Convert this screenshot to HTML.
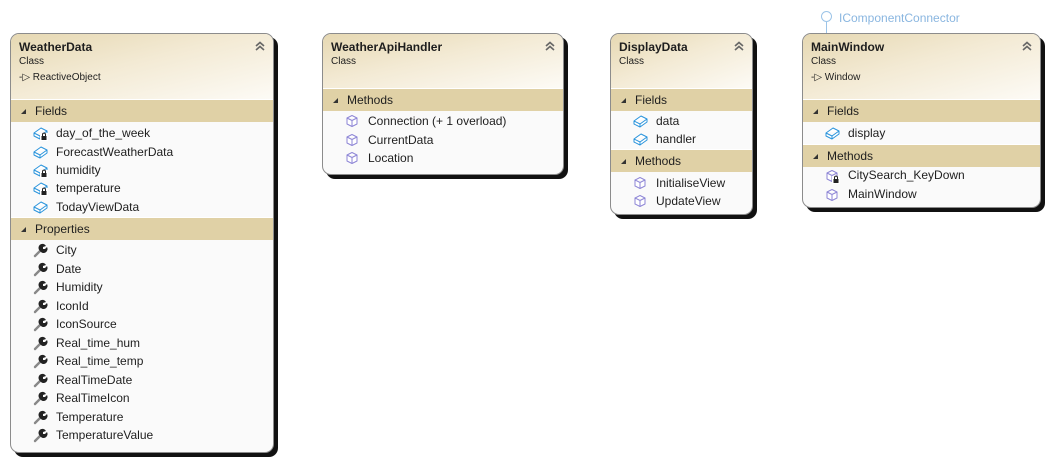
<!DOCTYPE html>
<html><head><meta charset="utf-8">
<style>
*{margin:0;padding:0;box-sizing:border-box}
body{width:1051px;height:462px;background:#fff;position:relative;overflow:hidden;font-family:"Liberation Sans",sans-serif;color:#1e1e1e}
.box{position:absolute;border:1px solid #8c8c8c;border-radius:9px;background:#fafafa;box-shadow:4px 4px 0 #111;overflow:hidden}
.hd{position:absolute;left:0;right:0;top:0;background:linear-gradient(to right bottom,#e6d8b2 0%,#f3ead4 45%,#fdfbf6 100%)}
.t{position:absolute;left:8px;top:6px;font-weight:bold;font-size:12px}
.c{position:absolute;left:8px;top:22px;font-size:10px}
.b{position:absolute;left:8px;top:38px;font-size:10px}
.chev{position:absolute;right:8px;top:7px;width:10px;height:10px}
.sec{position:absolute;left:0;right:0;height:23px;background:#e0d1a6;font-size:12px;border-top:1px solid #fff}
.sec span{position:absolute;left:24px;top:4px}
.sec i{position:absolute;left:10px;top:9px;width:0;height:0;border-left:5px solid transparent;border-bottom:5px solid #333}
.it{position:absolute;font-size:12px;white-space:nowrap}
.ic{position:absolute;width:16px;height:16px}
</style></head><body>

<svg width="0" height="0" style="position:absolute">
<defs>
<g id="fld"><path d="M2 8 L9 3 L15 6 L15 9 L8 14 L2 11 Z M2 8 L8 11 L15 6 M8 11 L8 14" fill="#fff" stroke="#2a94dc" stroke-width="1" stroke-linejoin="round"/></g>
<g id="mth"><path d="M3 5 L8 2.5 L13 5 L13 11 L8 13.5 L3 11 Z M3 5 L8 7.5 L13 5 M8 7.5 L8 13.5" fill="#fff" stroke="#8e86d6" stroke-width="1" stroke-linejoin="round"/></g>
<g id="lock"><rect x="8" y="8" width="8" height="8" fill="#fff"/><rect x="9.5" y="11" width="5" height="4" fill="#222"/><path d="M10.5 11 V9.6 a1.5 1.5 0 0 1 3 0 V11" fill="none" stroke="#222" stroke-width="1"/></g>
<g id="prp"><path d="M3 14 L9 8" stroke="#888" stroke-width="2.4" stroke-linecap="round"/><path d="M8 9 a4 4 0 1 1 6 -5 l-3 1 l0 2 l2 0 l2 -2 a4 4 0 0 1 -7 4" fill="#222"/></g>
<g id="chv"><path d="M1 5 L5 1.5 L9 5 M1 9 L5 5.5 L9 9" fill="none" stroke="#666" stroke-width="1.6"/></g>
</defs></svg>

<!-- WeatherData -->
<div class="box" style="left:10px;top:33px;width:264px;height:420px">
 <div class="hd" style="height:66px"><div class="t">WeatherData</div><div class="c">Class</div><div class="b">-▷ ReactiveObject</div><svg class="chev"><use href="#chv"/></svg></div>
 <div class="sec" style="top:65px"><i></i><span>Fields</span></div>
 <svg class="ic" style="left:21px;top:91px"><use href="#fld"/><use href="#lock"/></svg><div class="it" style="left:45px;top:92px">day_of_the_week</div>
 <svg class="ic" style="left:21px;top:110px"><use href="#fld"/></svg><div class="it" style="left:45px;top:111px">ForecastWeatherData</div>
 <svg class="ic" style="left:21px;top:128px"><use href="#fld"/><use href="#lock"/></svg><div class="it" style="left:45px;top:129px">humidity</div>
 <svg class="ic" style="left:21px;top:146px"><use href="#fld"/><use href="#lock"/></svg><div class="it" style="left:45px;top:147px">temperature</div>
 <svg class="ic" style="left:21px;top:165px"><use href="#fld"/></svg><div class="it" style="left:45px;top:166px">TodayViewData</div>
 <div class="sec" style="top:183px"><i></i><span>Properties</span></div>
 <svg class="ic" style="left:21px;top:208px"><use href="#prp"/></svg><div class="it" style="left:45px;top:209px">City</div>
 <svg class="ic" style="left:21px;top:227px"><use href="#prp"/></svg><div class="it" style="left:45px;top:228px">Date</div>
 <svg class="ic" style="left:21px;top:245px"><use href="#prp"/></svg><div class="it" style="left:45px;top:246px">Humidity</div>
 <svg class="ic" style="left:21px;top:264px"><use href="#prp"/></svg><div class="it" style="left:45px;top:265px">IconId</div>
 <svg class="ic" style="left:21px;top:282px"><use href="#prp"/></svg><div class="it" style="left:45px;top:283px">IconSource</div>
 <svg class="ic" style="left:21px;top:301px"><use href="#prp"/></svg><div class="it" style="left:45px;top:302px">Real_time_hum</div>
 <svg class="ic" style="left:21px;top:319px"><use href="#prp"/></svg><div class="it" style="left:45px;top:320px">Real_time_temp</div>
 <svg class="ic" style="left:21px;top:338px"><use href="#prp"/></svg><div class="it" style="left:45px;top:339px">RealTimeDate</div>
 <svg class="ic" style="left:21px;top:356px"><use href="#prp"/></svg><div class="it" style="left:45px;top:357px">RealTimeIcon</div>
 <svg class="ic" style="left:21px;top:375px"><use href="#prp"/></svg><div class="it" style="left:45px;top:376px">Temperature</div>
 <svg class="ic" style="left:21px;top:393px"><use href="#prp"/></svg><div class="it" style="left:45px;top:394px">TemperatureValue</div>
</div>

<!-- WeatherApiHandler -->
<div class="box" style="left:322px;top:33px;width:242px;height:142px">
 <div class="hd" style="height:55px"><div class="t">WeatherApiHandler</div><div class="c">Class</div><svg class="chev"><use href="#chv"/></svg></div>
 <div class="sec" style="top:54px"><i></i><span>Methods</span></div>
 <svg class="ic" style="left:21px;top:79px"><use href="#mth"/></svg><div class="it" style="left:45px;top:80px">Connection (+ 1 overload)</div>
 <svg class="ic" style="left:21px;top:98px"><use href="#mth"/></svg><div class="it" style="left:45px;top:99px">CurrentData</div>
 <svg class="ic" style="left:21px;top:116px"><use href="#mth"/></svg><div class="it" style="left:45px;top:117px">Location</div>
</div>

<!-- DisplayData -->
<div class="box" style="left:610px;top:33px;width:143px;height:182px">
 <div class="hd" style="height:55px"><div class="t">DisplayData</div><div class="c">Class</div><svg class="chev"><use href="#chv"/></svg></div>
 <div class="sec" style="top:54px"><i></i><span>Fields</span></div>
 <svg class="ic" style="left:21px;top:79px"><use href="#fld"/></svg><div class="it" style="left:45px;top:80px">data</div>
 <svg class="ic" style="left:21px;top:97px"><use href="#fld"/></svg><div class="it" style="left:45px;top:98px">handler</div>
 <div class="sec" style="top:115px"><i></i><span>Methods</span></div>
 <svg class="ic" style="left:21px;top:141px"><use href="#mth"/></svg><div class="it" style="left:45px;top:142px">InitialiseView</div>
 <svg class="ic" style="left:21px;top:159px"><use href="#mth"/></svg><div class="it" style="left:45px;top:160px">UpdateView</div>
</div>

<!-- MainWindow -->
<div style="position:absolute;left:826px;top:22px;width:1px;height:12px;background:#9cc4e8"></div>
<div style="position:absolute;left:821px;top:11px;width:11px;height:11px;border:1.5px solid #9cc4e8;border-radius:50%;background:#fff"></div>
<div style="position:absolute;left:839px;top:11px;font-size:12px;color:#8ab6e0">IComponentConnector</div>
<div class="box" style="left:802px;top:33px;width:239px;height:175px">
 <div class="hd" style="height:66px"><div class="t">MainWindow</div><div class="c">Class</div><div class="b">-▷ Window</div><svg class="chev"><use href="#chv"/></svg></div>
 <div class="sec" style="top:65px"><i></i><span>Fields</span></div>
 <svg class="ic" style="left:21px;top:91px"><use href="#fld"/></svg><div class="it" style="left:45px;top:92px">display</div>
 <div class="sec" style="top:110px"><i></i><span>Methods</span></div>
 <svg class="ic" style="left:21px;top:134px"><use href="#mth"/><use href="#lock"/></svg><div class="it" style="left:45px;top:134px">CitySearch_KeyDown</div>
 <svg class="ic" style="left:21px;top:153px"><use href="#mth"/></svg><div class="it" style="left:45px;top:153px">MainWindow</div>
</div>
</body></html>
